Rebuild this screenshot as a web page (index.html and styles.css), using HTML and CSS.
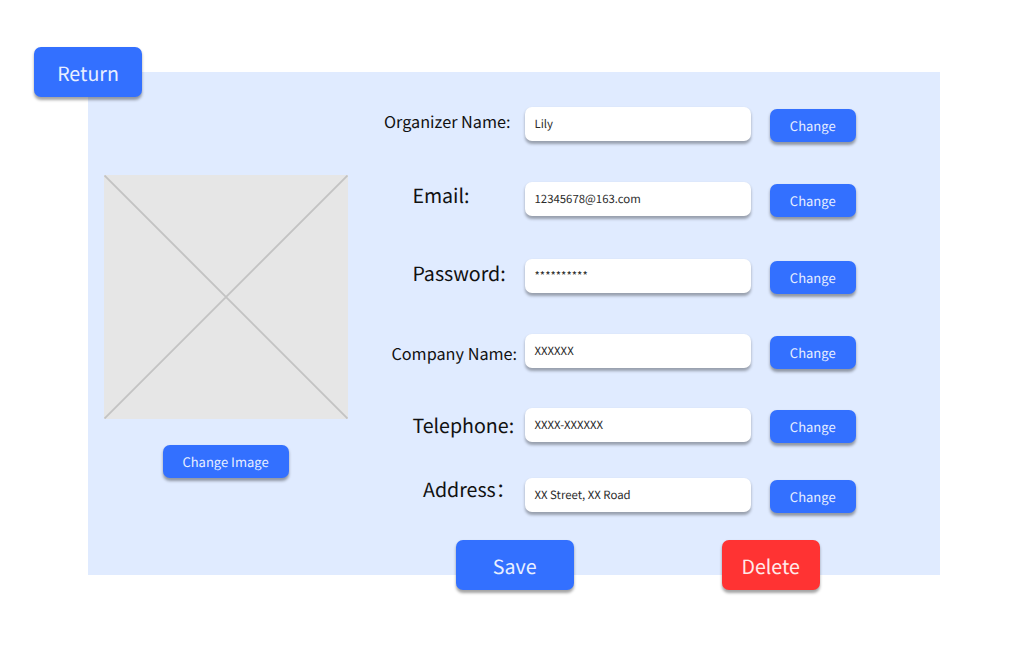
FILE: index.html
```html
<!DOCTYPE html>
<html lang="en">
<head>
<meta charset="utf-8">
<title>Organizer profile</title>
<link rel="stylesheet" href="styles.css">
</head>
<body>
<main class="panel">
  <button class="btn btn-large return">Return</button>
  <section class="media">
    <svg class="placeholder" viewBox="0 0 244 244"><rect width="244" height="244" fill="#e6e6e6"/><path d="M.5.5l243 243M243.5.5l-243 243" stroke="#c3c3c3" stroke-width="1.9"/></svg>
    <button class="btn change-image">Change Image</button>
  </section>
  <section class="form">
    <div class="fields">
      <div class="row"><label class="label organizer">Organizer Name:</label><div class="input">Lily</div><button class="btn">Change</button></div>
      <div class="row"><label class="label email">Email:</label><div class="input">12345678@163.com</div><button class="btn">Change</button></div>
      <div class="row"><label class="label password">Password:</label><div class="input">**********</div><button class="btn">Change</button></div>
      <div class="row"><label class="label company">Company Name:</label><div class="input">XXXXXX</div><button class="btn">Change</button></div>
      <div class="row"><label class="label telephone">Telephone:</label><div class="input">XXXX-XXXXXX</div><button class="btn">Change</button></div>
      <div class="row"><label class="label address">Address：</label><div class="input">XX Street, XX Road</div><button class="btn">Change</button></div>
    </div>
    <div class="actions"><button class="btn btn-large save">Save</button><button class="btn btn-large delete">Delete</button></div>
  </section>
</main>
</body>
</html>
```
FILE: styles.css
```css
* { box-sizing: border-box; }
body {
  margin: 0;
  padding: 72px 95px 0 88px;
  height: 647px;
  overflow: hidden;
  background: #fff;
  color: #111;
  font-family: "Noto Sans CJK SC", "Noto Sans", sans-serif;
  text-rendering: geometricPrecision;
}
.panel {
  position: relative;
  display: flex;
  width: 852px;
  height: 503px;
  background: #e0ebff;
}
.btn {
  width: 85.5px;
  height: 33px;
  padding: 1px 0 0;
  border: 0;
  border-radius: 7px;
  background: #3370ff;
  color: #e8efff;
  font: 13px/32px "Noto Sans CJK SC", "Noto Sans", sans-serif;
  text-rendering: inherit;
  white-space: nowrap;
  box-shadow: 0 2.5px 3px rgba(0, 0, 0, .36);
}
.btn-large { height: 50px; font-size: 19.6px; line-height: 49px; padding: 0; }
.return { position: absolute; left: -53.6px; top: -25px; width: 107.2px; }
.media {
  display: flex;
  flex-direction: column;
  align-items: center;
  width: 244px;
  margin: 103px 0 0 15.5px;
}
.placeholder { display: block; width: 244px; height: 244px; }
.change-image { width: 126px; margin-top: 25.5px; }
.form { margin: 35px 0 0 36.5px; }
.fields { display: grid; grid-template-rows: 74.5px 77.5px 75px 74px 70px 62px; }
.row {
  display: grid;
  grid-template-columns: 141px 225.5px 86px;
  align-items: start;
}
.row .btn { margin: 2px 0 0 19.5px; }
.label { white-space: nowrap; font-size: 19.6px; line-height: 34px; }
.organizer { font-size: 16.25px; margin-top: -3px; }
.email { padding-left: 28.4px; margin-top: -4px; }
.password { padding-left: 28.4px; margin-top: -3px; }
.company { font-size: 16.25px; padding-left: 7.4px; margin-top: 2px; }
.telephone { padding-left: 28.4px; }
.address { padding-left: 39px; margin-top: -6px; }
.input {
  height: 34px;
  padding: 0 9.5px;
  border-radius: 7px;
  background: #fff;
  color: #2b2b2b;
  font-size: 11.4px;
  line-height: 35px;
  white-space: nowrap;
  box-shadow: 0 2.5px 3px rgba(0, 0, 0, .32);
}
.actions { display: flex; gap: 148px; padding-left: 71.7px; }
.save { width: 118px; }
.delete { width: 98px; background: #ff3333; color: #ffeaea; }
```
